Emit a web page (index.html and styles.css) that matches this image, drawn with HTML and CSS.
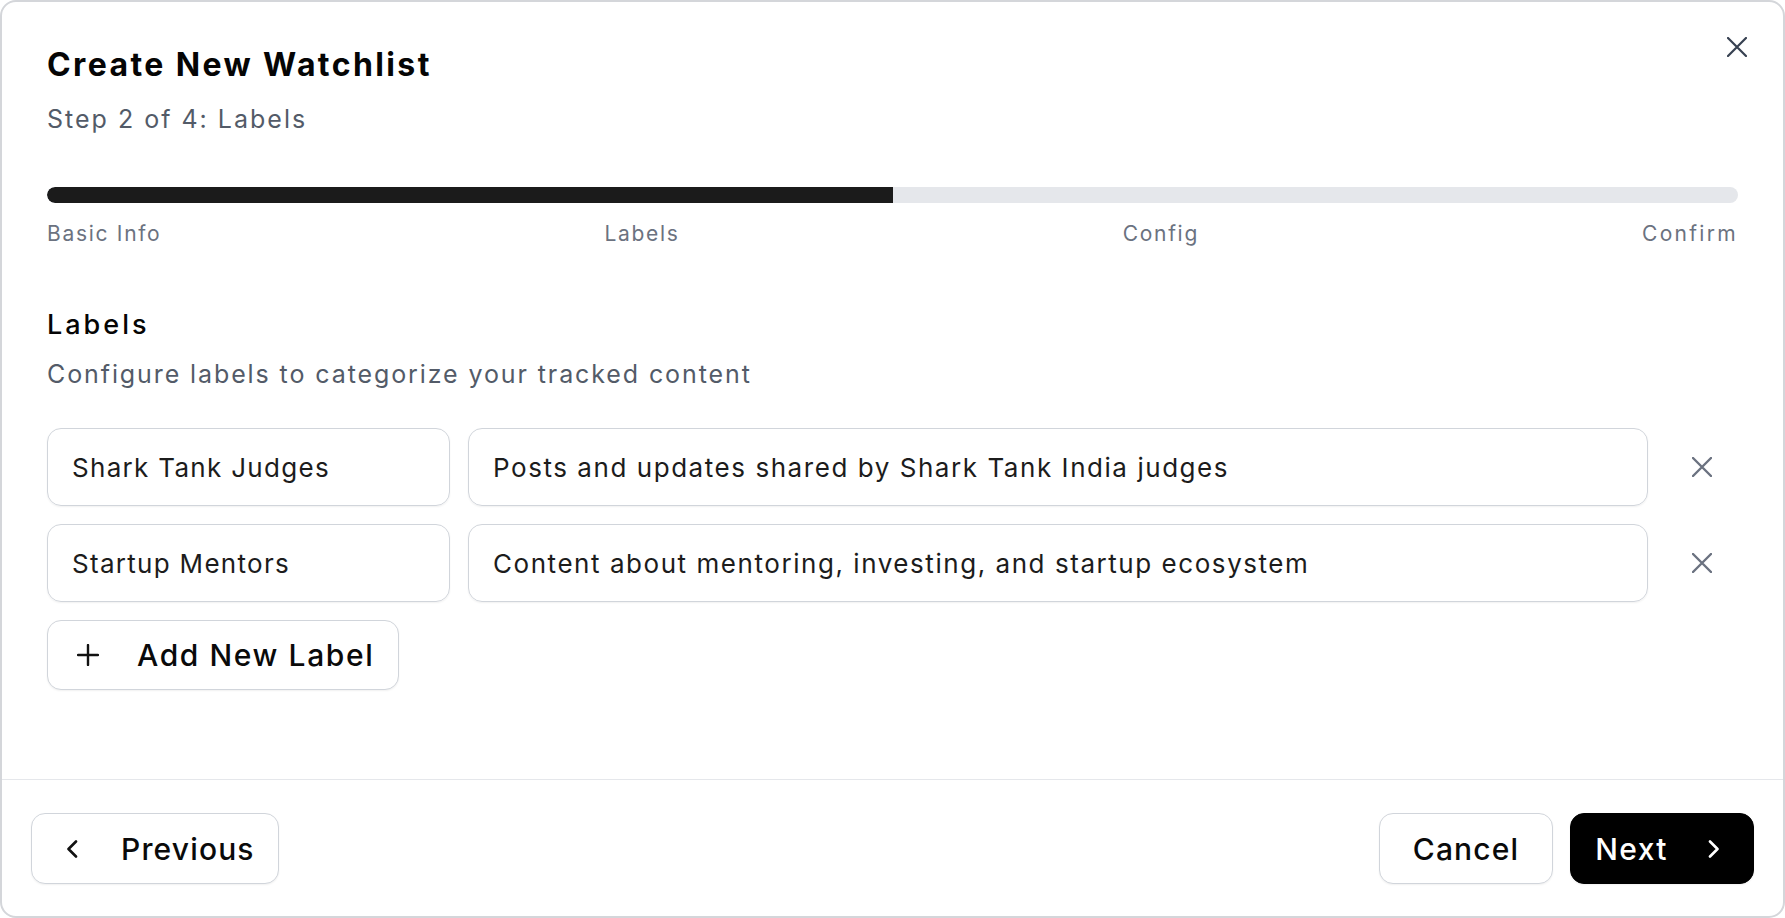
FILE: index.html
```html
<!DOCTYPE html>
<html lang="en">
<head>
<meta charset="utf-8">
<title>Create New Watchlist</title>
<link rel="stylesheet" href="styles.css">
</head>
<body>
<div class="modal">
  <button class="close" aria-label="Close">
    <svg width="20" height="20" viewBox="0 0 20 20"><path d="M1 1 L19 19 M19 1 L1 19" stroke="#374151" stroke-width="2.2" stroke-linecap="round" fill="none"/></svg>
  </button>
  <div class="body">
    <header class="head">
      <h1 class="title">Create New Watchlist</h1>
      <p class="subtitle">Step 2 of 4: Labels</p>
    </header>
    <div class="progress">
      <div class="track"><div class="fill" style="width:50%"></div></div>
      <div class="steps">
        <span>Basic Info</span>
        <span>Labels</span>
        <span>Config</span>
        <span>Confirm</span>
      </div>
    </div>
    <section class="labels">
      <h2 class="sec-title">Labels</h2>
      <p class="sec-desc">Configure labels to categorize your tracked content</p>
      <div class="rows">
        <div class="row">
          <div class="field name">Shark Tank Judges</div>
          <div class="field desc">Posts and updates shared by Shark Tank India judges</div>
          <button class="remove" aria-label="Remove">
            <svg width="20" height="20" viewBox="0 0 20 20"><path d="M1 1 L19 19 M19 1 L1 19" stroke="#6b7280" stroke-width="2.4" stroke-linecap="round" fill="none"/></svg>
          </button>
        </div>
        <div class="row">
          <div class="field name">Startup Mentors</div>
          <div class="field desc">Content about mentoring, investing, and startup ecosystem</div>
          <button class="remove" aria-label="Remove">
            <svg width="20" height="20" viewBox="0 0 20 20"><path d="M1 1 L19 19 M19 1 L1 19" stroke="#6b7280" stroke-width="2.4" stroke-linecap="round" fill="none"/></svg>
          </button>
        </div>
      </div>
      <button class="add">
        <svg class="plus" width="22" height="22" viewBox="0 0 22 22"><path d="M11 1 V21 M1 11 H21" stroke="#111" stroke-width="2.4" stroke-linecap="round" fill="none"/></svg>
        <span>Add New Label</span>
      </button>
    </section>
  </div>
  <footer class="foot">
    <button class="btn prev">
      <svg width="12" height="18" viewBox="0 0 12 18"><path d="M10 1.5 L2.5 9 L10 16.5" stroke="#111" stroke-width="2.6" stroke-linecap="round" stroke-linejoin="round" fill="none"/></svg>
      <span>Previous</span>
    </button>
    <div class="actions">
      <button class="btn cancel">Cancel</button>
      <button class="btn next">
        <span>Next</span>
        <svg width="12" height="18" viewBox="0 0 12 18"><path d="M2 1.5 L9.5 9 L2 16.5" stroke="#fff" stroke-width="2.6" stroke-linecap="round" stroke-linejoin="round" fill="none"/></svg>
      </button>
    </div>
  </footer>
</div>
</body>
</html>
```
FILE: styles.css
```css
* { box-sizing: border-box; }
html, body { margin: 0; padding: 0; background: #ffffff; }
body {
  font-family: "Inter", "Liberation Sans", sans-serif;
  color: #111111;
  width: 1785px;
  height: 918px;
  overflow: hidden;
}
button { font-family: inherit; cursor: pointer; }

.modal {
  position: relative;
  width: 1785px;
  height: 918px;
  border: 2px solid #d4d6da;
  border-radius: 16px;
  background: #ffffff;
  display: flex;
  flex-direction: column;
  overflow: hidden;
}

.close {
  position: absolute;
  top: 29px;
  right: 30px;
  width: 32px;
  height: 32px;
  border: 0;
  background: transparent;
  display: flex;
  align-items: center;
  justify-content: center;
  padding: 0;
}

.body {
  flex: 1;
  padding: 43px 45px 0 45px;
}

.title {
  margin: 0;
  font-size: 32px;
  line-height: 40px;
  font-weight: 700;
  letter-spacing: 2.4px;
  color: #050505;
}
.subtitle {
  margin: 18px 0 0 0;
  font-size: 25px;
  line-height: 32px;
  color: #535b68;
  letter-spacing: 2px;
}

.progress { margin-top: 52px; }
.track {
  height: 16px;
  border-radius: 8px;
  background: #e5e7eb;
  overflow: hidden;
}
.fill {
  height: 100%;
  background: #1b1b1b;
  border-radius: 8px 0 0 8px;
}
.steps {
  margin-top: 17px;
  display: flex;
  justify-content: space-between;
  font-size: 21px;
  line-height: 28px;
  color: #6b7280;
  letter-spacing: 1.7px;
}
.steps span:last-child { letter-spacing: 2.3px; }

.sec-title {
  margin: 61px 0 0 0;
  font-size: 27px;
  line-height: 32px;
  font-weight: 500;
  color: #050505;
  letter-spacing: 3px;
}
.sec-desc {
  margin: 17px 0 0 0;
  font-size: 25px;
  line-height: 32px;
  color: #535b68;
  letter-spacing: 1.9px;
}

.rows {
  margin-top: 38px;
  display: flex;
  flex-direction: column;
  gap: 18px;
}
.row {
  display: grid;
  grid-template-columns: 403px 1fr 72px;
  gap: 18px;
  height: 78px;
}
.field {
  border: 1.5px solid #d1d5db;
  border-radius: 14px;
  box-shadow: 0 1px 2px rgba(0, 0, 0, 0.06);
  display: flex;
  align-items: center;
  padding: 0 24px;
  font-size: 26px;
  color: #1c1c1c;
  letter-spacing: 1.3px;
  white-space: nowrap;
  overflow: hidden;
}
.field.desc { letter-spacing: 1.55px; }
.remove {
  border: 0;
  background: transparent;
  display: flex;
  align-items: center;
  justify-content: center;
  padding: 0;
}

.add {
  margin-top: 18px;
  height: 70px;
  display: inline-flex;
  align-items: center;
  gap: 38px;
  padding: 0 24px 0 29px;
  border: 1.5px solid #d1d5db;
  border-radius: 14px;
  background: #ffffff;
  box-shadow: 0 1px 2px rgba(0, 0, 0, 0.06);
  font-size: 30px;
  font-weight: 500;
  color: #0a0a0a;
  letter-spacing: 1.6px;
}

.foot {
  border-top: 1px solid #e5e7eb;
  padding: 33px 29px 32px 29px;
  display: flex;
  justify-content: space-between;
  align-items: center;
}
.actions {
  display: flex;
  gap: 17px;
}
.btn {
  height: 71px;
  display: inline-flex;
  align-items: center;
  border: 1.5px solid #d1d5db;
  border-radius: 14px;
  background: #ffffff;
  box-shadow: 0 1px 2px rgba(0, 0, 0, 0.06);
  font-size: 30px;
  font-weight: 500;
  color: #0a0a0a;
  letter-spacing: 1.15px;
}
.prev {
  padding: 0 23px 0 34px;
  gap: 43px;
}
.cancel {
  padding: 0 33px;
}
.next {
  padding: 0 33px 0 24px;
  gap: 40px;
  background: #000000;
  border-color: #000000;
  color: #ffffff;
  letter-spacing: 1.4px;
}
```
